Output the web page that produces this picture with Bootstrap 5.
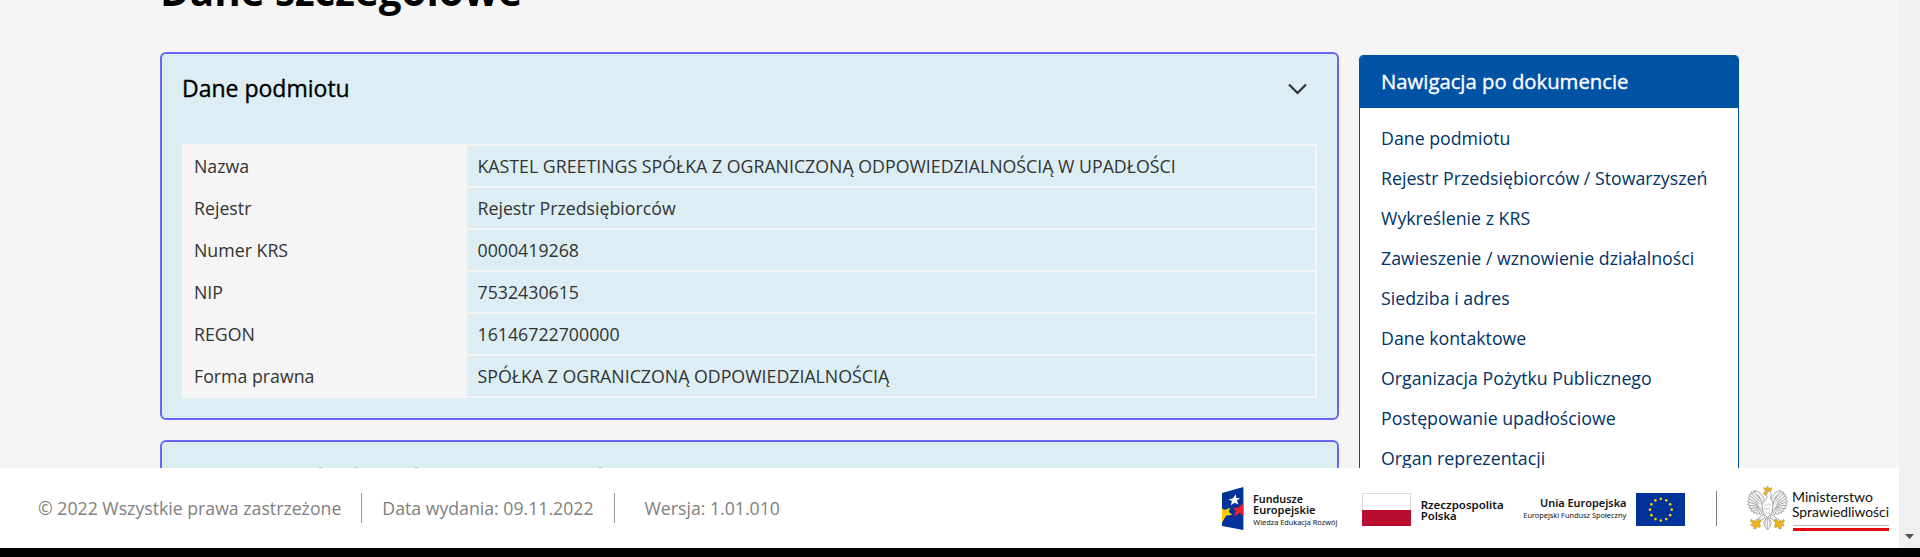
<!DOCTYPE html>
<html lang="pl">
<head>
<meta charset="utf-8">
<title>Dane szczegółowe</title>
<meta name="viewport" content="width=device-width, initial-scale=1">
<link href="https://cdn.jsdelivr.net/npm/bootstrap@5.3.0/dist/css/bootstrap.min.css" rel="stylesheet">
<style>
html, body { height: 100%; }
body { font-family: "Open Sans", sans-serif; font-size: 17.76px; line-height: 27px; color: #333; background: #000; overflow: hidden; }
.shell { height: 548px; background: #f5f5f5; }
.content-area { height: 468px; padding-left: 160px; }
.page-title { font-size: 40.3px; line-height: 48px; font-weight: 700; color: #000; margin: -33px 0 37px; }
.main-col { width: 1179px; }
.panel { background: #dcedf3; border: 2px solid #6666ff; border-radius: 6px; padding: 0 20px 20px; margin-bottom: 20px; height: 368px; }
.panel-title { font-size: 23px; line-height: 32px; font-weight: 400; -webkit-text-stroke: .35px #000; color: #000; margin: 0; }
.panel-head { padding: 18px 10px 40px 0; }
.panel + .panel .panel-head { padding-top: 19px; }
.data-grid { border: 2px solid #f5f5f5; }
.data-line { height: 42px; border-bottom: 2px solid #f5f5f5; line-height: 40px; }
.data-line:last-child { border-bottom: 0; height: 40px; }
.data-key { width: 283px; background: #f5f5f5; padding-left: 10px; height: 100%; }
.data-val { padding-left: 10.5px; }
.side-col { width: 380px; margin: 3px 0 0 20px; height: 500px; border: 1px solid #0052a5; border-radius: 4px; background: #fff; }
.side-head { background: #0052a5; color: #fff; height: 52px; line-height: 50px; font-size: 20.3px; -webkit-text-stroke: .35px #fff; padding-left: 21px; }
.side-list { padding: 17px 0 0 21px; }
.side-list a { color: #003366; text-decoration: none; line-height: 26px; margin-bottom: 14px; }
.foot { height: 80px; background: #fff; color: #808080; padding-left: 38px; font-size: 17.7px; }
.foot-rule { width: 1px; height: 30px; background: #999; margin: 0 20px; }
.foot-rule-wide { margin-right: 30px; }
.foot-logos { padding-right: 10px; }
.scroll-track { width: 21px; background: #f0f0f0; padding-bottom: 9px; }
svg { display: block; flex: none; }
.ft-bold { font: 600 11px "Noto Sans", sans-serif; fill: #111; }
.ft-thin { font: 400 7.4px "Noto Sans", sans-serif; fill: #111; }
.ft-lato { font: 400 14px Lato, sans-serif; fill: #111; }
</style>
</head>
<body>
<div class="shell d-flex">
  <div class="flex-grow-1 d-flex flex-column">
    <main class="content-area overflow-hidden">
      <h1 class="page-title">Dane szczegółowe</h1>
      <div class="d-flex">
        <div class="main-col">
          <section class="panel">
            <div class="panel-head d-flex justify-content-between align-items-center">
              <h2 class="panel-title">Dane podmiotu</h2>
              <svg width="20" height="14" viewBox="0 0 20 14"><path d="M2 3.500 10.500 12 19 3.500" fill="none" stroke="#333" stroke-width="2.2"/></svg>
            </div>
            <div class="data-grid">
              <div class="data-line d-flex"><div class="data-key">Nazwa</div><div class="data-val">KASTEL GREETINGS SPÓŁKA Z OGRANICZONĄ ODPOWIEDZIALNOŚCIĄ W UPADŁOŚCI</div></div>
              <div class="data-line d-flex"><div class="data-key">Rejestr</div><div class="data-val">Rejestr Przedsiębiorców</div></div>
              <div class="data-line d-flex"><div class="data-key">Numer KRS</div><div class="data-val">0000419268</div></div>
              <div class="data-line d-flex"><div class="data-key">NIP</div><div class="data-val">7532430615</div></div>
              <div class="data-line d-flex"><div class="data-key">REGON</div><div class="data-val">16146722700000</div></div>
              <div class="data-line d-flex"><div class="data-key">Forma prawna</div><div class="data-val">SPÓŁKA Z OGRANICZONĄ ODPOWIEDZIALNOŚCIĄ</div></div>
            </div>
          </section>
          <section class="panel">
            <div class="panel-head"><h2 class="panel-title">Rejestr Przedsiębiorców / Stowarzyszeń</h2></div>
          </section>
        </div>
        <aside class="side-col overflow-hidden">
          <div class="side-head">Nawigacja po dokumencie</div>
          <nav class="side-list d-flex flex-column align-items-start">
            <a href="#">Dane podmiotu</a>
            <a href="#">Rejestr Przedsiębiorców / Stowarzyszeń</a>
            <a href="#">Wykreślenie z KRS</a>
            <a href="#">Zawieszenie / wznowienie działalności</a>
            <a href="#">Siedziba i adres</a>
            <a href="#">Dane kontaktowe</a>
            <a href="#">Organizacja Pożytku Publicznego</a>
            <a href="#">Postępowanie upadłościowe</a>
            <a href="#">Organ reprezentacji</a>
          </nav>
        </aside>
      </div>
    </main>
    <footer class="foot d-flex align-items-center justify-content-between">
      <div class="d-flex align-items-center">
        <span>© 2022 Wszystkie prawa zastrzeżone</span>
        <span class="foot-rule"></span>
        <span>Data wydania: 09.11.2022</span>
        <span class="foot-rule foot-rule-wide"></span>
        <span>Wersja: 1.01.010</span>
      </div>
      <div class="foot-logos d-flex align-items-center">
        <!-- Fundusze Europejskie -->
        <svg width="140" height="48" viewBox="1222 484 140 48">
          <path d="M1222 493 1243.400 487V530L1222 526z" fill="#003399"/>
          <path d="M1235.800 494.300l.5 3.600 3.800.3-3.200 2.300 1.600 4-3.900-1.800-3.800 2.600 1.100-4.200-3.500-1.600 4.300-.9z" fill="#fff"/>
          <path d="M1243.400 503V516.500l-3.400-3.700-6.200 3.600 2-5.600-3-2.900 5.600-.5z" fill="#e8212e"/>
          <path d="M1222 508.500l2.400 1.300 6-1.700-1.700 3.600 3.600 3.200-6 .6-4.300 7z" fill="#ffcc00"/>
          <text class="ft-bold" x="1253" y="503" textLength="50" lengthAdjust="spacingAndGlyphs">Fundusze</text>
          <text class="ft-bold" x="1253" y="513.800" textLength="62.500" lengthAdjust="spacingAndGlyphs">Europejskie</text>
          <text class="ft-thin" x="1253.300" y="524.600" textLength="84" lengthAdjust="spacingAndGlyphs">Wiedza Edukacja Rozwój</text>
        </svg>
        <!-- Rzeczpospolita Polska -->
        <svg width="161" height="48" viewBox="1362 484 161 48">
          <path d="M1362 493h49v33h-49z" fill="#ddd"/>
          <path d="M1363 494h47v16h-47z" fill="#fff"/>
          <path d="M1362 510h49v16h-49z" fill="#ba0c2f"/>
          <text class="ft-bold" x="1420.700" y="508.600" textLength="83" lengthAdjust="spacingAndGlyphs">Rzeczpospolita</text>
          <text class="ft-bold" x="1420.700" y="519.700" textLength="36" lengthAdjust="spacingAndGlyphs">Polska</text>
        </svg>
        <!-- Unia Europejska -->
        <svg width="165" height="48" viewBox="1523 484 165 48">
          <text class="ft-bold" x="1540" y="507" textLength="86.500" lengthAdjust="spacingAndGlyphs">Unia Europejska</text>
          <text class="ft-thin" x="1523.300" y="517.700" textLength="103" lengthAdjust="spacingAndGlyphs">Europejski Fundusz Społeczny</text>
          <path d="M1636 493h49v33h-49z" fill="#003399"/>
          <g fill="#ffcc00">
            <circle cx="1660.800" cy="498.800" r="1.350"/><circle cx="1666.300" cy="500.300" r="1.350"/><circle cx="1670.200" cy="504.300" r="1.350"/><circle cx="1671.700" cy="509.700" r="1.350"/><circle cx="1670.200" cy="515.200" r="1.350"/><circle cx="1666.300" cy="519.100" r="1.350"/><circle cx="1660.800" cy="520.600" r="1.350"/><circle cx="1655.400" cy="519.100" r="1.350"/><circle cx="1651.400" cy="515.200" r="1.350"/><circle cx="1650" cy="509.700" r="1.350"/><circle cx="1651.400" cy="504.300" r="1.350"/><circle cx="1655.400" cy="500.300" r="1.350"/>
          </g>
        </svg>
        <!-- Ministerstwo Sprawiedliwości -->
        <svg width="201" height="48" viewBox="1688 484 201 48">
          <path d="M1716 491h1v35h-1z" fill="#808080"/>
          <defs>
            <g id="wing" fill="#f6f6f6" stroke="#777" stroke-width=".6" stroke-linejoin="round">
              <path d="M1764 500c-1-5-5-9-10-9.500l.6 1.700-3.400-.2 1 2-3 .5 1.300 1.800-2.600 1.300 1.700 1.600-2.300 2 2.100 1.100-1.600 2.400 2.200.8-1 2.700 2.300.4-.3 2.600 2.400-.3.400 2.500 2.100-.9 1.200 2.200 1.800-1.500 1.900 1.600 2.300-4z"/>
              <path fill="none" d="M1754.600 492.200l6 8M1752.200 494l7.300 7.500M1750.500 496.300l8 6.500M1749.600 499.200l8.600 5M1749.400 502.300l9 3M1750 505.500l9 .8M1751.200 508.600l8.300-1.500M1753.600 510.900l6.500-3M1756.100 512.500l4.800-4M1759.100 513.200l2.900-4"/>
              <path fill="none" d="M1757 494.500c3 3 5 6 4.500 10"/>
              <path d="M1763.500 514l-5.500 4.800-3.500 2 2 1.700 4-1.700 4.500-3z"/>
            </g>
          </defs>
          <use href="#wing"/>
          <use href="#wing" transform="matrix(-1 0 0 1 3535 0)"/>
          <path d="M1767.500 517l-4 5.500 1 2 1.200 3 1.800 2.500 1.800-2.500 1.200-3 1-2z" fill="#fafafa" stroke="#777" stroke-width=".6"/>
          <path d="M1766 518l-1.200 8M1767.500 518v11M1769 518l1.200 8" stroke="#888" stroke-width=".5"/>
          <path d="M1765.500 494l2-3 3 .3.800 3-.7 4 2.500 4.500-1 9-4.600 6.200-4.600-6.200-1-8 3.700-4 1.600-3.600z" fill="#fcfcfc" stroke="#777" stroke-width=".6"/>
          <path d="M1764.500 504l2 1.500 2-1.500 2 1.500M1764 508l2 1.500 2-1.500 2 1.500M1765.500 512l2 1.500 2-1.500" fill="none" stroke="#999" stroke-width=".5"/>
          <path d="M1763.500 487.500l2.500 1 1.600-2.600 1.600 2.600 2.800-.8-1.200 3h-5.800zM1763.400 492.600l3.200-1 1 2-2.700 2z" fill="#efb91c" stroke="#8c7020" stroke-width=".4"/>
          <g fill="#efb91c" stroke="#8c7020" stroke-width=".4">
            <path id="talon" d="M1761.200 520.200l-2-1-2.800 2.200-2.800-.4-2.600-1.700-.5 2 2.300 2-1.800 1.200.7 1.800 2.700-.7-.9 2.800 2.200.7 1.900-3.200 1.500 2 1.500-1.500-1.100-3z"/>
            <use href="#talon" transform="matrix(-1 0 0 1 3535 0)"/>
          </g>
          <text class="ft-lato" x="1792" y="501.500" textLength="81" lengthAdjust="spacingAndGlyphs">Ministerstwo</text>
          <text class="ft-lato" x="1792" y="517" textLength="97" lengthAdjust="spacingAndGlyphs">Sprawiedliwości</text>
          <path d="M1793 525h96v1h-96z" fill="#bbb"/>
          <path d="M1793 528h96v3h-96z" fill="#e30613"/>
        </svg>
      </div>
    </footer>
  </div>
  <div class="scroll-track d-flex align-items-end justify-content-center">
    <svg width="9" height="5" viewBox="0 0 9 5"><path d="M0 0h9L4.500 5z" fill="#505050"/></svg>
  </div>
</div>
<script src="https://cdn.jsdelivr.net/npm/bootstrap@5.3.0/dist/js/bootstrap.bundle.min.js"></script>
</body>
</html>
